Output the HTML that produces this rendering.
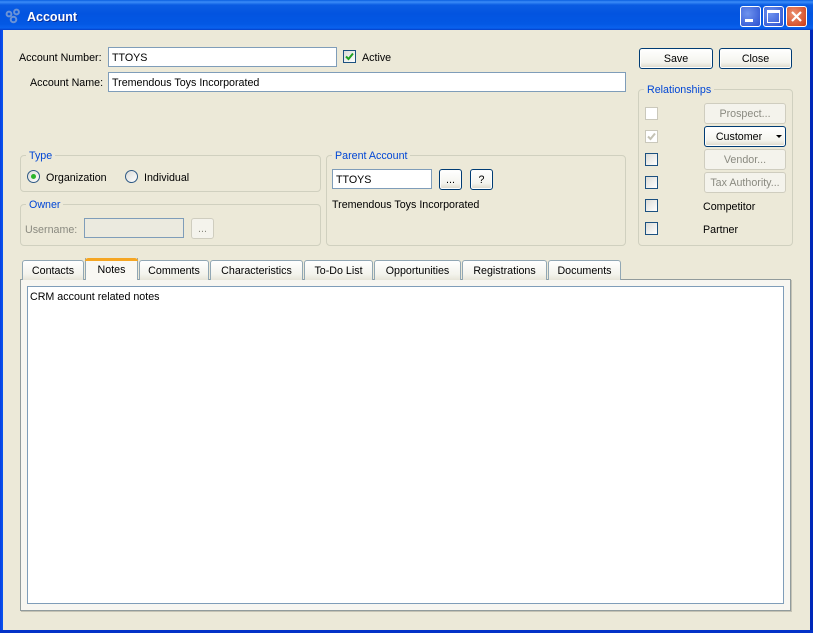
<!DOCTYPE html>
<html><head><meta charset="utf-8"><title>Account</title>
<style>
html,body{margin:0;padding:0;background:#ece9d8;}
#w{position:relative;width:813px;height:633px;overflow:hidden;background:#ece9d8;font-family:"Liberation Sans",sans-serif;font-size:10.7px;color:#000;}
#w div{position:absolute;box-sizing:border-box;}
.t{white-space:nowrap;line-height:16px;height:16px;}
.g{border:1px solid #d0d0bf;border-radius:4px;}
.lg{color:#0046d5;background:#ece9d8;padding:0 3px;white-space:nowrap;line-height:16px;height:16px;}
.i{background:#fff;border:1px solid #7f9db9;line-height:20px;padding-left:3px;white-space:nowrap;}
.b{border:1px solid #003c74;border-radius:3px;background:linear-gradient(#fff,#f4f4ee 70%,#dcd8c8);text-align:center;line-height:21px;white-space:nowrap;box-shadow:inset 0 0 0 1px #fdfdfb;}
.d{border:1px solid #cfcdbf;border-radius:3px;background:#f4f3ec;text-align:center;line-height:21px;color:#8a8a80;white-space:nowrap;}
.c{width:13px;height:13px;border:1px solid #1c5180;background:linear-gradient(135deg,#dcdcd7,#fff);}
.cd{width:13px;height:13px;border:1px solid #cac8bb;background:#fff;}
.r{width:13px;height:13px;border:1px solid #2f5a85;border-radius:50%;background:linear-gradient(135deg,#dcdcd7,#fff);}
.tab{top:260px;height:20px;border:1px solid #91a7b4;border-bottom:none;border-radius:3px 3px 0 0;background:linear-gradient(#fff,#f3f3ec 70%,#e6e4d8);text-align:center;line-height:21px;white-space:nowrap;}
</style></head><body>
<div id="w">
<div style="left:0;top:0;width:813px;height:30px;background:linear-gradient(#0a5fe0 0,#3b8cf8 2px,#0a5ce2 5px,#0354e0 14px,#0358e4 24px,#0a62ee 28px,#0340c8 30px);"></div>
<div style="left:0;top:30px;width:3px;height:603px;background:linear-gradient(90deg,#0a3fe0,#0855f0);"></div>
<div style="left:810px;top:30px;width:3px;height:603px;background:#0028b8;"></div>
<div style="left:0;top:630px;width:813px;height:3px;background:#0332c8;"></div>

<svg style="position:absolute;left:5px;top:8px" width="16" height="16" viewBox="0 0 16 16" fill="none" stroke="#6b93d6" stroke-width="2"><circle cx="4" cy="6" r="2.4"/><circle cx="11.5" cy="4" r="2.4"/><circle cx="8.5" cy="11.5" r="2.8"/></svg>
<div class="t" style="left:27px;top:9px;color:#fff;font-weight:bold;font-size:12.5px;text-shadow:1px 1px 0 #0a2f9a;">Account</div>

<div style="left:740px;top:6px;width:21px;height:21px;border:1px solid #fff;border-radius:3px;background:radial-gradient(circle at 35% 35%,#6f93ee,#2a50d0);"></div>
<div style="left:745px;top:19px;width:8px;height:3px;background:#fff;"></div>
<div style="left:763px;top:6px;width:21px;height:21px;border:1px solid #fff;border-radius:3px;background:radial-gradient(circle at 35% 35%,#6f93ee,#2a50d0);"></div>
<div style="left:767px;top:10px;width:13px;height:13px;border:1px solid #fff;border-top-width:3px;"></div>
<div style="left:786px;top:6px;width:21px;height:21px;border:1px solid #fff;border-radius:3px;background:radial-gradient(circle at 35% 35%,#ec9070,#cc3a14);"></div>
<svg style="position:absolute;left:786px;top:6px" width="21" height="21"><path d="M6 6L15 15M15 6L6 15" stroke="#fff" stroke-width="2.2"/></svg>

<div class="t" style="left:19px;top:50px;">Account Number:</div>
<div class="i" style="left:108px;top:47px;width:229px;height:20px;">TTOYS</div>
<div class="c" style="left:343px;top:50px;"></div>
<svg style="position:absolute;left:343px;top:50px" width="13" height="13"><path d="M3 6.5L5.5 9L10 3.5" fill="none" stroke="#21a121" stroke-width="2"/></svg>
<div class="t" style="left:362px;top:50px;">Active</div>
<div class="t" style="left:30px;top:75px;">Account Name:</div>
<div class="i" style="left:108px;top:72px;width:518px;height:20px;">Tremendous Toys Incorporated</div>

<div class="b" style="left:639px;top:48px;width:74px;height:21px;">Save</div>
<div class="b" style="left:719px;top:48px;width:73px;height:21px;">Close</div>

<div class="g" style="left:638px;top:89px;width:155px;height:157px;"></div>
<div class="lg" style="left:644px;top:82px;">Relationships</div>
<div class="cd" style="left:645px;top:107px;"></div>
<div class="d" style="left:704px;top:103px;width:82px;height:21px;">Prospect...</div>
<div class="cd" style="left:645px;top:130px;"></div>
<svg style="position:absolute;left:645px;top:130px" width="13" height="13"><path d="M3 6.5L5.5 9L10 3.5" fill="none" stroke="#c4c2b4" stroke-width="2"/></svg>
<div class="b" style="left:704px;top:126px;width:82px;height:21px;padding-right:12px;">Customer</div>
<svg style="position:absolute;left:776px;top:135px" width="6" height="3"><path d="M0 0H6L3 3Z" fill="#000"/></svg>
<div class="c" style="left:645px;top:153px;"></div>
<div class="d" style="left:704px;top:149px;width:82px;height:21px;">Vendor...</div>
<div class="c" style="left:645px;top:176px;"></div>
<div class="d" style="left:704px;top:172px;width:82px;height:21px;">Tax Authority...</div>
<div class="c" style="left:645px;top:199px;"></div>
<div class="t" style="left:703px;top:199px;">Competitor</div>
<div class="c" style="left:645px;top:222px;"></div>
<div class="t" style="left:703px;top:222px;">Partner</div>

<div class="g" style="left:20px;top:155px;width:301px;height:37px;"></div>
<div class="lg" style="left:26px;top:148px;">Type</div>
<div class="r" style="left:27px;top:170px;"></div>
<div style="left:31px;top:174px;width:5px;height:5px;border-radius:50%;background:#2cb52c;"></div>
<div class="t" style="left:46px;top:170px;">Organization</div>
<div class="r" style="left:125px;top:170px;"></div>
<div class="t" style="left:144px;top:170px;">Individual</div>

<div class="g" style="left:20px;top:204px;width:301px;height:42px;"></div>
<div class="lg" style="left:26px;top:197px;">Owner</div>
<div class="t" style="left:25px;top:222px;color:#8a8a80;">Username:</div>
<div class="i" style="left:84px;top:218px;width:100px;height:20px;background:#ebeadf;"></div>
<div class="d" style="left:191px;top:218px;width:23px;height:21px;">...</div>

<div class="g" style="left:326px;top:155px;width:300px;height:91px;"></div>
<div class="lg" style="left:332px;top:148px;">Parent Account</div>
<div class="i" style="left:332px;top:169px;width:100px;height:20px;">TTOYS</div>
<div class="b" style="left:439px;top:169px;width:23px;height:21px;">...</div>
<div class="b" style="left:470px;top:169px;width:23px;height:21px;">?</div>
<div class="t" style="left:332px;top:197px;">Tremendous Toys Incorporated</div>

<div style="left:20px;top:279px;width:771px;height:332px;background:#f7f6f1;border:1px solid #919b9c;box-shadow:1px 1px 0 #c4c2b4;"></div>
<div style="left:27px;top:286px;width:757px;height:318px;background:#fff;border:1px solid #7f9db9;"></div>
<div class="t" style="left:30px;top:289px;">CRM account related notes</div>

<div class="tab" style="left:22px;width:62px;">Contacts</div>
<div class="tab" style="left:139px;width:70px;">Comments</div>
<div class="tab" style="left:210px;width:93px;">Characteristics</div>
<div class="tab" style="left:304px;width:69px;">To-Do List</div>
<div class="tab" style="left:374px;width:87px;">Opportunities</div>
<div class="tab" style="left:462px;width:85px;">Registrations</div>
<div class="tab" style="left:548px;width:73px;">Documents</div>
<div style="left:85px;top:258px;width:53px;height:22px;background:#f9f8f3;border:1px solid #91a7b4;border-bottom:none;border-top:none;text-align:center;line-height:25px;">Notes</div>
<div style="left:85px;top:258px;width:53px;height:3px;background:#f5a623;border-radius:3px 3px 0 0;"></div>
</div>
</body></html>
